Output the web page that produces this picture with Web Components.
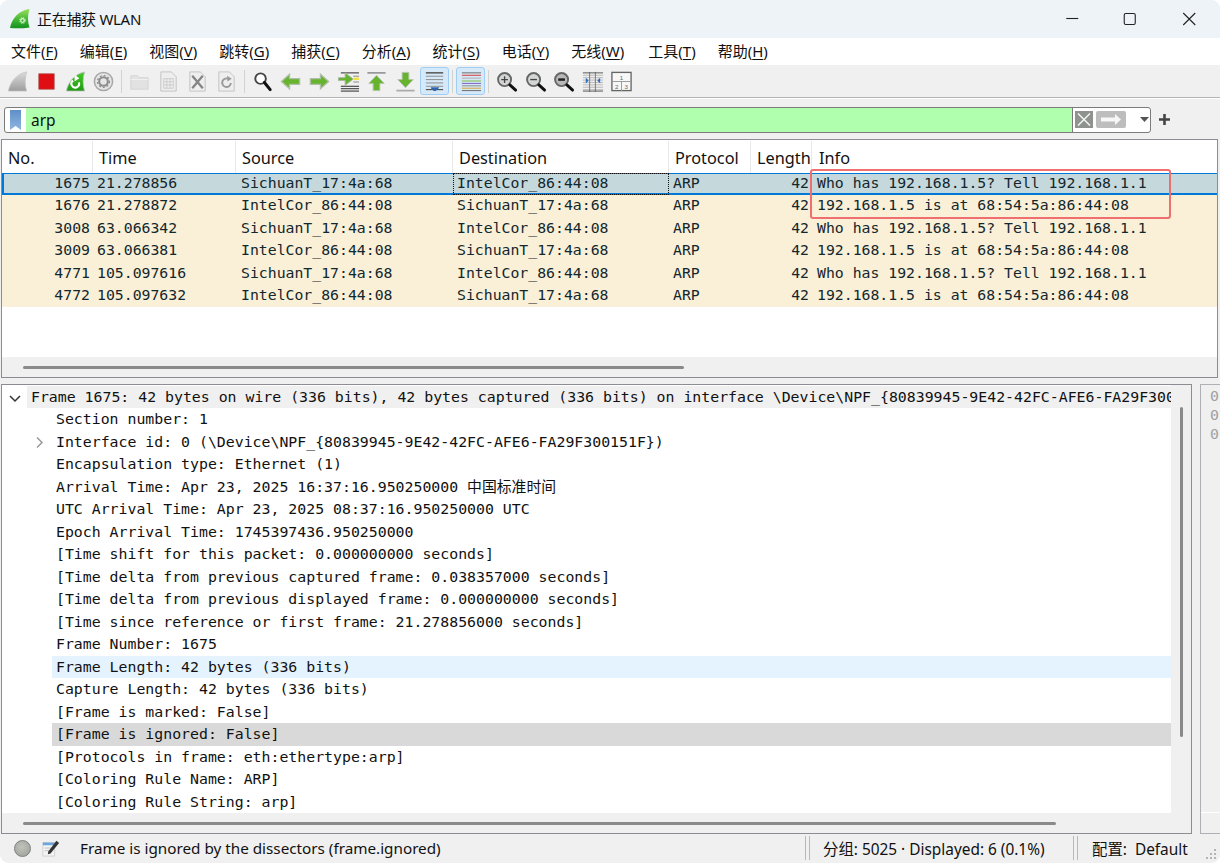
<!DOCTYPE html>
<html lang="zh">
<head>
<meta charset="utf-8">
<title>正在捕获 WLAN</title>
<style>
  html, body { margin: 0; padding: 0; height: 100%; background: #ffffff; overflow: hidden; }
  body { font-family: "Noto Sans", "Noto Sans CJK SC", sans-serif; font-size: 16px; color: #000; }
</style>
</head>
<body>
<ws-window>
  <title-bar slot="top">正在捕获 WLAN</title-bar>
  <menu-bar slot="top">
    <menu-item key="F">文件</menu-item>
    <menu-item key="E">编辑</menu-item>
    <menu-item key="V">视图</menu-item>
    <menu-item key="G">跳转</menu-item>
    <menu-item key="C">捕获</menu-item>
    <menu-item key="A">分析</menu-item>
    <menu-item key="S">统计</menu-item>
    <menu-item key="Y">电话</menu-item>
    <menu-item key="W">无线</menu-item>
    <menu-item key="T" style="margin-left:2px">工具</menu-item>
    <menu-item key="H">帮助</menu-item>
  </menu-bar>
  <tool-bar slot="top"></tool-bar>
  <filter-bar slot="top">arp</filter-bar>

  <packet-list>
    <packet-row selected no="1675" time="21.278856" src="SichuanT_17:4a:68" dst="IntelCor_86:44:08" info="Who has 192.168.1.5? Tell 192.168.1.1"></packet-row>
    <packet-row no="1676" time="21.278872" src="IntelCor_86:44:08" dst="SichuanT_17:4a:68" info="192.168.1.5 is at 68:54:5a:86:44:08"></packet-row>
    <packet-row no="3008" time="63.066342" src="SichuanT_17:4a:68" dst="IntelCor_86:44:08" info="Who has 192.168.1.5? Tell 192.168.1.1"></packet-row>
    <packet-row no="3009" time="63.066381" src="IntelCor_86:44:08" dst="SichuanT_17:4a:68" info="192.168.1.5 is at 68:54:5a:86:44:08"></packet-row>
    <packet-row no="4771" time="105.097616" src="SichuanT_17:4a:68" dst="IntelCor_86:44:08" info="Who has 192.168.1.5? Tell 192.168.1.1"></packet-row>
    <packet-row no="4772" time="105.097632" src="IntelCor_86:44:08" dst="SichuanT_17:4a:68" info="192.168.1.5 is at 68:54:5a:86:44:08"></packet-row>
  </packet-list>

  <detail-tree>
    <tree-row top open state="frame">Frame 1675: 42 bytes on wire (336 bits), 42 bytes captured (336 bits) on interface \Device\NPF_{80839945-9E42-42FC-AFE6-FA29F300</tree-row>
    <tree-row>Section number: 1</tree-row>
    <tree-row closed>Interface id: 0 (\Device\NPF_{80839945-9E42-42FC-AFE6-FA29F300151F})</tree-row>
    <tree-row>Encapsulation type: Ethernet (1)</tree-row>
    <tree-row>Arrival Time: Apr 23, 2025 16:37:16.950250000 中国标准时间</tree-row>
    <tree-row>UTC Arrival Time: Apr 23, 2025 08:37:16.950250000 UTC</tree-row>
    <tree-row>Epoch Arrival Time: 1745397436.950250000</tree-row>
    <tree-row>[Time shift for this packet: 0.000000000 seconds]</tree-row>
    <tree-row>[Time delta from previous captured frame: 0.038357000 seconds]</tree-row>
    <tree-row>[Time delta from previous displayed frame: 0.000000000 seconds]</tree-row>
    <tree-row>[Time since reference or first frame: 21.278856000 seconds]</tree-row>
    <tree-row>Frame Number: 1675</tree-row>
    <tree-row state="hover">Frame Length: 42 bytes (336 bits)</tree-row>
    <tree-row>Capture Length: 42 bytes (336 bits)</tree-row>
    <tree-row>[Frame is marked: False]</tree-row>
    <tree-row state="current">[Frame is ignored: False]</tree-row>
    <tree-row>[Protocols in frame: eth:ethertype:arp]</tree-row>
    <tree-row>[Coloring Rule Name: ARP]</tree-row>
    <tree-row>[Coloring Rule String: arp]</tree-row>
  </detail-tree>

  <status-bar slot="bottom"></status-bar>
</ws-window>

<script>
// fixed column widths of the packet list, shared by the header and rows
const COLS = '91px 143px 217px 216px 82px 61px 1fr';
const MONO = '"DejaVu Sans Mono", "Noto Sans CJK SC", monospace';

const fin = (c1, c2, extra) => `<svg viewBox="0 0 24 24">
  <defs><linearGradient id="f${c1.slice(1)}" x1="0" y1="0" x2="0" y2="1"><stop offset="0" stop-color="${c1}"/><stop offset="1" stop-color="${c2}"/></linearGradient></defs>
  <path d="M2.500 22C4 13 11 4 21.500 2C19.500 8 19.500 16 21.500 22Z" fill="url(#f${c1.slice(1)})" stroke="#c4c4c4" stroke-width=".8"/>${extra || ''}</svg>`;
const svg = (body) => `<svg viewBox="0 0 24 24">${body}</svg>`;

const lines = (ys, c, x1 = 4, x2 = 20, w = 1) => ys.map((y) => `<path d="M${x1} ${y}H${x2}" stroke="${c}" stroke-width="${w}"/>`).join('');
const lens = (inner, fill = '#d4d6d6') => `<circle cx="10" cy="10" r="6.800" fill="${fill}" stroke="#666" stroke-width="2"/>
  ${inner}<path d="M15.500 15.500l6 5.500" stroke="#111" stroke-width="3" stroke-linecap="round"/>`;
const arrowH = (d) => `<path d="${d}" fill="#66b32e" stroke="#b0bfa8" stroke-width="1.400"/>`;
const DOC = '<path d="M4 2h11l5 5v15H4z" fill="#eeeeee" stroke="#c2c2c2"/>';

const ICONS = {
  fin: fin('#dcdcdc', '#9c9c9c'),
  stop: svg('<rect x="4" y="4" width="16" height="16" fill="#e00d12" stroke="#a44" stroke-width=".8"/>'),
  restart: fin('#45cc25', '#1f9a14', '<path d="M15.500 13a4 4 0 1 1-6-2" fill="none" stroke="#fff" stroke-width="2.200"/><path d="M11 5v7l5-3.500z" fill="#fff"/>'),
  gear: svg('<circle cx="12" cy="12" r="9.500" fill="#e6e6e6" stroke="#a8a8a8" stroke-width="1.600"/><circle cx="12" cy="12" r="4.500" fill="none" stroke="#8c8c8c" stroke-width="2.200"/><circle cx="12" cy="12" r="6.200" fill="none" stroke="#8c8c8c" stroke-width="1.400" stroke-dasharray="2 2.100"/>'),
  folder: svg('<path d="M3 6h7l2 2h9v12H3z" fill="#e2e2e2" stroke="#d4d4d4"/><path d="M3 10h18" stroke="#f0f0f0"/>'),
  file: svg(DOC + '<path d="M7 9h10v10H7zM7 12.300h10M7 15.600h10M10.300 9v10M13.600 9v10" fill="none" stroke="#c8c8c8" stroke-width=".9"/>'),
  close: svg(DOC + '<path d="M6.500 6l11 13M17.500 6l-11 13" stroke="#858585" stroke-width="2.400"/>'),
  reload: svg(DOC + '<path d="M16.500 13.500a4.500 4.500 0 1 1-2-4" fill="none" stroke="#9a9a9a" stroke-width="2"/><path d="M12.500 6l5 3-4.500 3z" fill="#9a9a9a"/>'),
  find: svg('<circle cx="10" cy="9" r="5.500" fill="#fff" stroke="#444" stroke-width="2"/><path d="M14 13l6 7.500" stroke="#111" stroke-width="3.200" stroke-linecap="round"/>'),
  back: svg(arrowH('M2.500 12l8.500-7.500v4.500h10.500v6H11v4.500z')),
  forward: svg(arrowH('M21.500 12l-8.500-7.500v4.500H2.500v6H13v4.500z')),
  go: svg(lines([3, 17, 19.500, 22], '#444', 4, 23, 1.200) + lines([6.500, 12.500], '#999', 17, 23, 1.200) + '<path d="M1.500 8h7V3l8.500 6.500-8.500 6.500v-5h-7z" fill="#66b32e" stroke="#a7b8a0"/><path d="M17.500 8h5.500v2.500h-5.500z" fill="#f0e040"/>'),
  first: svg('<path d="M2.500 3h19" stroke="#999" stroke-width="1.800"/><path d="M12 5.500l8 8.500h-4.500v7.500h-7V14H4z" fill="#66b32e" stroke="#b4c4aa"/>'),
  last: svg('<path d="M2.500 21.500h19" stroke="#aaa" stroke-width="1.800"/><path d="M12 18.500l-8-8.500h4.500V2.500h7V10H20z" fill="#66b32e" stroke="#b4c4aa"/>'),
  scroll: svg(lines([3, 6.500, 10, 13.500, 17], '#8b8b8b', 3, 21) + lines([3, 20.500], '#333', 3, 21) + '<path d="M8 18h9l-1.500 2h-1l-1 2h-2.500l-1-2H9z" fill="#2f66b0"/>'),
  color: svg('<path d="M3 3h20" stroke="#666"/><path d="M3 5.500h20" stroke="#d33"/><path d="M3 8.500h20" stroke="#aaa"/><path d="M3 11.500h20" stroke="#7bb83a"/><path d="M3 14h20" stroke="#7a5cc0"/><path d="M3 16.500h20" stroke="#888"/><path d="M3 19h20" stroke="#d8a030"/><path d="M3 21.500h20" stroke="#666"/>'),
  zoomin: svg(lens('<path d="M6.500 10h7M10 6.500v7" stroke="#444" stroke-width="1.400"/>')),
  zoomout: svg(lens('<path d="M6.500 10h7" stroke="#444" stroke-width="1.400"/>')),
  zoomnorm: svg(lens('<path d="M6.500 10h7" stroke="#222" stroke-width="2.600"/>', '#b8baba')),
  resize: svg(lines([5.500, 8, 10.500, 13, 15.500, 18, 20.500], '#b8b8b8', 2, 23) + '<path d="M9 2v21M15 2v21" stroke="#777"/><path d="M2 3h21M2 22h21" stroke="#555"/><path d="M5 8l3 3-3 3zM20 8l-3 3 3 3z" fill="#2a6fc0"/>'),
  layout: svg('<rect x="2" y="2.500" width="20" height="19" fill="#f7f7f7" stroke="#666" stroke-width="1.400"/><path d="M2 12h20M12 12v10" stroke="#999"/><text x="12" y="10" font-size="6.500" text-anchor="middle" fill="#666" font-family="Liberation Sans">1</text><text x="7" y="19.500" font-size="6.500" text-anchor="middle" fill="#666" font-family="Liberation Sans">2</text><text x="17" y="19.500" font-size="6.500" text-anchor="middle" fill="#666" font-family="Liberation Sans">3</text>'),
};

const windowTpl = document.createElement('template');
windowTpl.innerHTML = `
<style>
  :host {
    display: flex;
    flex-direction: column;
    position: relative;
    width: 1220px;
    height: 863px;
    box-sizing: border-box;
    background: #f0f0f0;
    border-radius: 9px;
    overflow: hidden;
  }
  .panes {
    flex: 1;
    min-height: 0;
    display: flex;
    flex-direction: column;
    gap: 6px;
    padding: 0 2px 0 1px;
  }
  .mark {
    position: absolute;
    left: 810px;
    top: 169px;
    width: 361px;
    height: 50px;
    box-sizing: border-box;
    border: 2px solid #ef6f70;
    border-radius: 3px;
    pointer-events: none;
  }
</style>
<slot name="top"></slot>
<div class="panes"><slot></slot></div>
<slot name="bottom"></slot>
<div class="mark"></div>
`;
class WsWindow extends HTMLElement {
  constructor() {
    super();
    this.attachShadow({ mode: 'open' }).appendChild(windowTpl.content.cloneNode(true));
  }
}

const titleTpl = document.createElement('template');
titleTpl.innerHTML = `
<style>
  :host {
    display: flex;
    align-items: center;
    height: 38px;
    flex: none;
    box-sizing: border-box;
    background: #eef3f8;
    padding: 0 2px 2px 9px;
    font-size: 15px;
    letter-spacing: -.3px;
    color: #111;
  }
  .logo { width: 22px; height: 22px; margin-right: 6px; margin-top: 2px; flex: none; }
  .text { flex: 1; }
  .btns { display: flex; height: 36px; }
  .btns svg { width: 58.500px; height: 36px; display: block; }
</style>
<svg class="logo" viewBox="0 0 22 22">
  <defs><linearGradient id="g" x1="0" y1="0" x2="0" y2="1"><stop offset="0" stop-color="#9be05a"/><stop offset=".6" stop-color="#3cb332"/><stop offset="1" stop-color="#159022"/></linearGradient></defs>
  <path d="M1 20C3 10 10 2.500 20.500 1C18.500 7 18.500 14 20.500 19.500C14 20.500 7 20.500 1 20Z" fill="url(#g)"/>
  <circle cx="13.500" cy="12.500" r="1.800" fill="none" stroke="#eaf7e2" stroke-width="1.200"/>
  <circle cx="13.500" cy="12.500" r="3" fill="none" stroke="#d4efc6" stroke-width=".9" stroke-dasharray="1.200 1.200"/>
</svg>
<span class="text"><slot></slot></span>
<div class="btns">
  <svg viewBox="0 0 58 36"><path d="M23 18.500h12" stroke="#222" stroke-width="1.100"/></svg>
  <svg viewBox="0 0 58 36"><rect x="23" y="13.500" width="11" height="11" rx="1.500" fill="none" stroke="#222" stroke-width="1.100"/></svg>
  <svg viewBox="0 0 58 36"><path d="M23 13l12 12M35 13l-12 12" stroke="#222" stroke-width="1.100"/></svg>
</div>
`;
class TitleBar extends HTMLElement {
  constructor() {
    super();
    this.attachShadow({ mode: 'open' }).appendChild(titleTpl.content.cloneNode(true));
  }
}

const menuBarTpl = document.createElement('template');
menuBarTpl.innerHTML = `
<style>
  :host {
    display: flex;
    align-items: center;
    gap: 22px;
    height: 27px;
    flex: none;
    box-sizing: border-box;
    padding: 0 0 2px 11px;
    background: #fff;
    font-size: 15px;
  }
</style>
<slot></slot>
`;
class MenuBar extends HTMLElement {
  constructor() {
    super();
    this.attachShadow({ mode: 'open' }).appendChild(menuBarTpl.content.cloneNode(true));
  }
}

class MenuItem extends HTMLElement {
  constructor() {
    super();
    const key = this.getAttribute('key');
    this.attachShadow({ mode: 'open' }).innerHTML = `
      <style>
        :host { display: inline-block; white-space: nowrap; color: #111; }
        u { text-underline-offset: 2px; }
      </style>
      <slot></slot>(<u>${key}</u>)`;
  }
}

class ToolBar extends HTMLElement {
  constructor() {
    super();
    const groups = [
      [['fin'], ['stop'], ['restart'], ['gear']],
      [['folder'], ['file'], ['close'], ['reload']],
      [['find'], ['back'], ['forward'], ['go'], ['first'], ['last'], ['scroll', 1]],
      [['color', 1]],
      [['zoomin'], ['zoomout'], ['zoomnorm'], ['resize'], ['layout']],
    ];
    const html = groups.map((g) => g.map(([name, on]) =>
      `<span class="btn${on ? ' on' : ''}">${ICONS[name]}</span>`).join('')).join('<i></i>');
    this.attachShadow({ mode: 'open' }).innerHTML = `
      <style>
        :host {
          display: flex;
          align-items: center;
          flex: none;
          height: 32px;
          padding-left: 3.500px;
          box-sizing: border-box;
          background: #f0f0f0;
        }
        .btn {
          width: 28.700px;
          height: 28px;
          box-sizing: border-box;
          display: flex;
          align-items: center;
          justify-content: center;
          flex: none;
          border-radius: 3px;
          border: 1px solid transparent;
        }
        .btn svg { width: 23px; height: 23px; flex: none; }
        .on { background: #d5e9f9; border-color: #9fcef5; }
        i { width: 1px; height: 23px; margin: 0 3.200px; background: #d2d2d2; flex: none; }
      </style>${html}`;
  }
}

const filterTpl = document.createElement('template');
filterTpl.innerHTML = `
<style>
  :host {
    display: flex;
    align-items: center;
    flex: none;
    height: 42px;
    box-sizing: border-box;
    padding: 8px 0 6px 4px;
    border-top: 1px solid #b4b4b4;
    box-shadow: inset 0 1px 0 #fff;
    background: #f0f0f0;
  }
  .box {
    display: flex;
    width: 1147px;
    height: 26px;
    box-sizing: border-box;
    border: 1px solid #7b7b7b;
    border-radius: 3px;
    background: #fff;
    overflow: hidden;
  }
  .mark { width: 21px; display: flex; align-items: center; justify-content: center; flex: none; }
  .text {
    flex: 1;
    background: #afffaf;
    padding-left: 5px;
    border-right: 1px solid #7b7b7b;
    line-height: 24px;
    font-size: 15.500px;
    color: #111;
  }
  .tools { width: 77px; display: flex; align-items: center; flex: none; gap: 3px; padding-left: 2px; box-sizing: border-box; }
  .plus { margin-left: 8px; }
</style>
<div class="box">
  <span class="mark"><svg width="11" height="20" viewBox="0 0 11 20"><defs><linearGradient id="b" x1="0" y1="0" x2="0" y2="1"><stop offset="0" stop-color="#5f8fc8"/><stop offset="1" stop-color="#8fb6e2"/></linearGradient></defs><path d="M0 0h11v20L5.500 16 0 20z" fill="url(#b)"/></svg></span>
  <span class="text"><slot></slot></span>
  <span class="tools">
    <svg width="18" height="17" viewBox="0 0 18 17"><rect width="18" height="17" fill="#8f9390"/><path d="M3 2.500l12 12M15 2.500L3 14.500" stroke="#f4f4f4" stroke-width="1.500"/></svg>
    <svg width="30" height="17" viewBox="0 0 30 17"><rect width="30" height="17" rx="2" fill="#bdbdbd"/><path d="M5 6.500h14V3l6 5.500-6 5.500v-3.500H5z" fill="#f7f7f7"/></svg>
    <svg style="margin-left:11px" width="9" height="5" viewBox="0 0 9 5"><path d="M0 0h9L4.500 5z" fill="#555"/></svg>
  </span>
</div>
<svg class="plus" width="11" height="11" viewBox="0 0 11 11"><path d="M5.500 0v11M0 5.500h11" stroke="#444" stroke-width="2.600"/></svg>
`;
class FilterBar extends HTMLElement {
  constructor() {
    super();
    this.attachShadow({ mode: 'open' }).appendChild(filterTpl.content.cloneNode(true));
  }
}

const listTpl = document.createElement('template');
listTpl.innerHTML = `
<style>
  :host {
    display: flex;
    flex-direction: column;
    flex: none;
    height: 239px;
    box-sizing: border-box;
    border: 1px solid #8c8c92;
    background: #fff;
    overflow: hidden;
  }
  .head {
    display: grid;
    grid-template-columns: ${COLS};
    height: 33px;
    flex: none;
    line-height: 35px;
    font-size: 16.300px;
    color: #111;
  }
  .head span { padding-left: 6px; border-right: 1px solid #e8e8e8; white-space: nowrap; overflow: hidden; margin-top: 1px; }
  .head span:last-child { border-right: 0; padding-left: 7px; }
  .rows { flex: 1; min-height: 0; }
  .hbar { height: 20px; flex: none; background: #f0f0f0; display: flex; align-items: center; padding-left: 21px; }
  .hbar b { display: block; width: 661px; height: 3px; background: #8a8a8a; border-radius: 2px; }
</style>
<div class="head"><span>No.</span><span>Time</span><span>Source</span><span>Destination</span><span>Protocol</span><span>Length</span><span>Info</span></div>
<div class="rows"><slot></slot></div>
<div class="hbar"><b></b></div>
`;
class PacketList extends HTMLElement {
  constructor() {
    super();
    this.attachShadow({ mode: 'open' }).appendChild(listTpl.content.cloneNode(true));
  }
}

class PacketRow extends HTMLElement {
  constructor() {
    super();
    const a = (n) => this.getAttribute(n);
    this.attachShadow({ mode: 'open' }).innerHTML = `
      <style>
        :host {
          display: grid;
          grid-template-columns: ${COLS};
          height: 22.400px;
          box-sizing: border-box;
          background: #faf0d7;
          color: #12272e;
          font-family: ${MONO};
          font-size: 14.800px;
          line-height: 20px;
          white-space: pre;
        }
        :host([selected]) {
          background: #c5d8dc;
          box-shadow: inset 0 1px 0 #0078d7, inset 0 -2px 0 #0078d7, inset 2px 0 0 #0078d7;
        }
        span { padding-left: 4px; overflow: hidden; }
        .s { padding-left: 5px; }
        .i { padding-left: 5px; }
        .r { text-align: right; padding: 0 3px 0 0; }
        .r2 { text-align: right; padding: 0 3px 0 0; }
        :host([selected]) .d { outline: 1px dotted #111; outline-offset: -1px; }
      </style>
      <span class="r">${a('no')}</span><span>${a('time')}</span><span class="s">${a('src')}</span><span class="d">${a('dst')}</span><span class="p">ARP</span><span class="r2">42</span><span class="i">${a('info')}</span>`;
  }
}

const treeTpl = document.createElement('template');
treeTpl.innerHTML = `
<style>
  :host {
    display: block;
    flex: 1;
    min-height: 0;
    box-sizing: border-box;
  }
  .wrap { display: flex; height: 100%; gap: 8px; margin-right: -2px; }
  .pane {
    flex: none;
    width: 1191px;
    box-sizing: border-box;
    border: 1px solid #8c8c92;
    display: grid;
    grid-template-columns: 1fr 20px;
    grid-template-rows: 1fr 20px;
    background: #f0f0f0;
  }
  .body { background: #fff; overflow: hidden; min-width: 0; padding-top: .5px; box-sizing: border-box; }
  .vbar { display: flex; justify-content: center; padding-top: 22px; box-sizing: border-box; }
  .vbar b { display: block; width: 3px; height: 330px; background: #8a8a8a; border-radius: 2px; }
  .hbar { display: flex; align-items: center; padding-left: 21px; }
  .hbar b { display: block; width: 1033px; height: 3px; background: #8a8a8a; border-radius: 2px; }
  .bytes {
    flex: 1;
    box-sizing: border-box;
    border: 1px solid #b0b0b4;
    border-right: 0;
    overflow: hidden;
    padding: 1px 0 0 9px;
    font-family: ${MONO};
    font-size: 14.800px;
    line-height: 19px;
    color: #a0a0a0;
    white-space: pre;
    background: linear-gradient(#fff, #fff) 0 427px / 100% 1px no-repeat;
  }
</style>
<div class="wrap">
  <div class="pane">
    <div class="body"><slot></slot></div>
    <div class="vbar"><b></b></div>
    <div class="hbar"><b></b></div>
    <div></div>
  </div>
  <div class="bytes">0
0
0</div>
</div>
`;
class DetailTree extends HTMLElement {
  constructor() {
    super();
    this.attachShadow({ mode: 'open' }).appendChild(treeTpl.content.cloneNode(true));
  }
}

class TreeRow extends HTMLElement {
  constructor() {
    super();
    const open = this.hasAttribute('open');
    const closed = this.hasAttribute('closed');
    const arrow = open ? '<path d="M1 1l5 5 5-5" fill="none" stroke="#333" stroke-width="1.500"/>'
      : closed ? '<path d="M3 .5l5 5-5 5" fill="none" stroke="#999" stroke-width="1.500"/>' : '';
    this.attachShadow({ mode: 'open' }).innerHTML = `
      <style>
        :host {
          display: flex;
          height: 22.500px;
          font-family: ${MONO};
          font-size: 14.850px;
          line-height: 22.500px;
          white-space: pre;
          color: #111;
        }
        .gut { width: 50px; flex: none; background: #fff; position: relative; }
        :host([top]) .gut { width: 25px; }
        svg { position: absolute; width: 12px; height: 12px; }
        :host([top]) svg { left: 7px; top: 9px; }
        :host([closed]) svg { left: 32px; top: 6px; }
        .txt { flex: 1; min-width: 0; padding-left: 4px; overflow: hidden; }
        :host([state=frame]) .txt { background: #f0f0f0; }
        :host([state=hover]) .txt { background: #e5f3ff; }
        :host([state=current]) .txt { background: #d9d9d9; }
      </style>
      <span class="gut">${arrow ? `<svg viewBox="0 0 12 12">${arrow}</svg>` : ''}</span>
      <span class="txt"><slot></slot></span>`;
  }
}

class StatusBar extends HTMLElement {
  constructor() {
    super();
    this.attachShadow({ mode: 'open' }).innerHTML = `
      <style>
        :host {
          display: flex;
          align-items: center;
          flex: none;
          position: relative;
          height: 29px;
          box-sizing: border-box;
          background: #f0f0f0;
          padding: 0 0 1px 14px;
          font-size: 15.400px;
          color: #111;
          white-space: nowrap;
        }
        .dot { width: 17px; height: 17px; border-radius: 50%; background: radial-gradient(circle at 45% 40%, #c0c2bc, #9c9e98); border: 1.500px solid #7f7f7f; box-sizing: border-box; flex: none; }
        .edit { margin-left: 11px; flex: none; }
        .msg { margin-left: 20px; flex: none; width: 725px; font-size: 15.250px; }
        .sep { width: 5px; height: 24px; border-left: 1px solid #b8b8b8; border-right: 1px solid #b8b8b8; box-sizing: border-box; flex: none; }
        .count { margin-left: 13px; width: 250px; flex: none; }
        .prof { margin-left: 14px; flex: none; }
        .grip { position: absolute; right: 2px; bottom: 2px; }
      </style>
      <span class="dot"></span>
      <svg class="edit" width="18" height="18" viewBox="0 0 20 20">
        <path d="M1 4h13v15H1z" fill="#f4f4f4" stroke="#cfcfcf"/><path d="M1 4h13v3H1z" fill="#6ea6dc"/>
        <path d="M3 10h8M3 13h6" stroke="#bbb"/><path d="M7 14L16 2l3 2.500-9.500 11.500-3 1z" fill="#333"/>
      </svg>
      <span class="msg">Frame is ignored by the dissectors (frame.ignored)</span>
      <span class="sep"></span>
      <span class="count">分组: 5025 · Displayed: 6 (0.1%)</span>
      <span class="sep"></span>
      <span class="prof">配置:&nbsp; Default</span>
      <svg class="grip" width="14" height="14" viewBox="0 0 14 14" fill="#b4b4b4">
        <rect x="10" y="2" width="2" height="2"/><rect x="6" y="6" width="2" height="2"/><rect x="10" y="6" width="2" height="2"/>
        <rect x="2" y="10" width="2" height="2"/><rect x="6" y="10" width="2" height="2"/><rect x="10" y="10" width="2" height="2"/>
      </svg>`;
  }
}

customElements.define('ws-window', WsWindow);
customElements.define('title-bar', TitleBar);
customElements.define('menu-bar', MenuBar);
customElements.define('menu-item', MenuItem);
customElements.define('tool-bar', ToolBar);
customElements.define('filter-bar', FilterBar);
customElements.define('packet-list', PacketList);
customElements.define('packet-row', PacketRow);
customElements.define('detail-tree', DetailTree);
customElements.define('tree-row', TreeRow);
customElements.define('status-bar', StatusBar);
</script>
</body>
</html>
